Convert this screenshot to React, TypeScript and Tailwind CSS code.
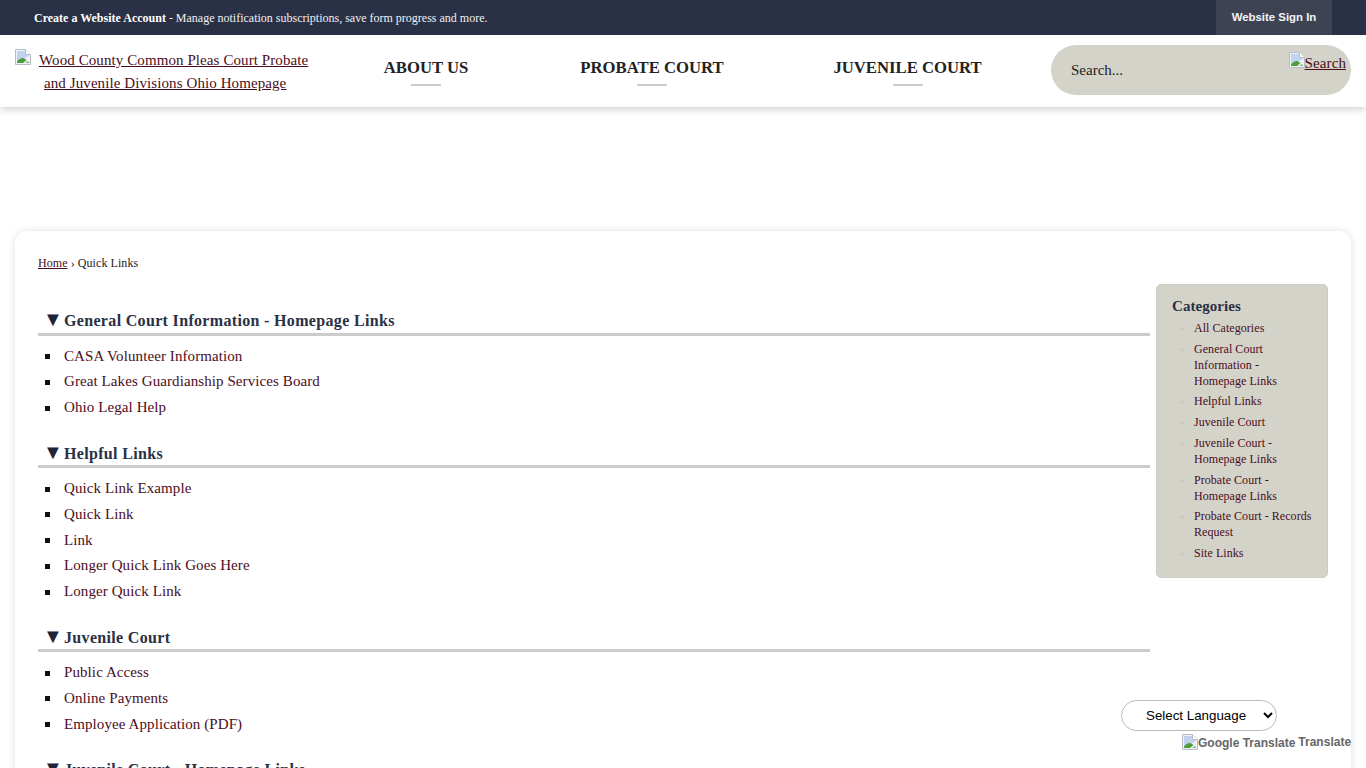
const F = "[font-family:'Liberation_Serif',serif]";

function Broken({ className = "" }: { className?: string }) {
  return (
    <svg width="16" height="16" viewBox="0 0 16 16" className={className}>
      <path d="M0.5 0.5H10.5L15.5 5.5V15.5H0.5Z" fill="#eef1f7" stroke="#b8bcc6" />
      <path d="M10.5 0.5V5.5H15.5" fill="#ffffff" stroke="#b8bcc6" />
      <path d="M2 2H10V6H14V7L2 13Z" fill="#bfd2f0" />
      <path d="M2 14V12.5C4 10 6.5 8.5 8.5 9L11.5 11L8 14Z" fill="#4f9e3a" />
      <path d="M10 14L12.5 12L14 13V14Z" fill="#8fc07e" />
    </svg>
  );
}

const sections = [
  { title: "General Court Information - Homepage Links", links: ["CASA Volunteer Information", "Great Lakes Guardianship Services Board", "Ohio Legal Help"] },
  { title: "Helpful Links", links: ["Quick Link Example", "Quick Link", "Link", "Longer Quick Link Goes Here", "Longer Quick Link"] },
  { title: "Juvenile Court", links: ["Public Access", "Online Payments", "Employee Application (PDF)"] },
  { title: "Juvenile Court - Homepage Links", links: [] as string[] },
];

const cats = [
  ["All Categories"],
  ["General Court Information -", "Homepage Links"],
  ["Helpful Links"],
  ["Juvenile Court"],
  ["Juvenile Court -", "Homepage Links"],
  ["Probate Court -", "Homepage Links"],
  ["Probate Court - Records", "Request"],
  ["Site Links"],
];

const nav = [
  { t: "ABOUT US", w: "w-[84px]", ml: "ml-[69px]" },
  { t: "PROBATE COURT", w: "w-[144px]", ml: "ml-[112px]" },
  { t: "JUVENILE COURT", w: "w-[149px]", ml: "ml-[109px]" },
];

export default function App() {
  return (
    <div className={`h-[768px] w-[1366px] overflow-hidden bg-white relative ${F}`}>
      <div className="h-[35px] bg-[#2a3045] flex items-center pl-[34px] relative z-20">
        <p className="text-[12px] text-[#f0f0f2]">
          <b className="text-white">Create a Website Account</b> - Manage notification subscriptions, save form progress and more.
        </p>
        <a className="ml-auto mr-[34px] w-[116px] h-[35px] bg-[#3e4354] flex items-center justify-center text-[#f4f4f6] text-[11.4px] font-bold font-['Liberation_Sans',sans-serif]">
          Website Sign In
        </a>
      </div>

      <header className="h-[72px] bg-white shadow-[0_2px_8px_rgba(0,0,0,0.2)] flex relative z-10 pl-[15px]">
        <a className="w-[300px] pt-[14px] text-[15px] leading-[23px] tracking-[0.09px] text-[#4a0d1c] underline block whitespace-nowrap">
          <span className="flex">
            <Broken className="mr-[8px] shrink-0" />
            <span>Wood County Common Pleas Court Probate</span>
          </span>
          <span className="block ml-[29px]">and Juvenile Divisions Ohio Homepage</span>
        </a>
        {nav.map((n) => (
          <div key={n.t} className={`${n.w} ${n.ml} shrink-0 flex flex-col items-center pt-[23px]`}>
            <span className="text-[16.7px] leading-[20px] font-bold text-[#222] whitespace-nowrap">{n.t}</span>
            <span className="block w-[30px] h-[2px] bg-[#ccc] mt-[6px]" />
          </div>
        ))}
        <div className="ml-[69px] mt-[10px] w-[300px] h-[50px] rounded-[25px] bg-[#d4d3c9] flex items-start pl-[20px] pr-[5px] relative">
          <span className="text-[15px] text-[#222] mt-[16px] leading-[18px]">Search...</span>
          <a className="ml-auto mt-[7px] flex text-[15px] leading-[18px] tracking-[0.1px] text-[#4a0d1c] underline">
            <Broken className="shrink-0" />
            <span className="mt-[2px]">Search</span>
          </a>
        </div>
      </header>

      <main className="mx-[15px] mt-[124px] bg-white rounded-t-[12px] shadow-[0_0_8px_rgba(0,0,0,0.12)] h-[600px] pl-[23px] pr-[23px] pt-[24px]">
        <p className="text-[12px] leading-[16px] tracking-[0.07px] text-[#222]">
          <a className="text-[#4a0d1c] underline">Home</a> › Quick Links
        </p>
        <div className="flex mt-[13px]">
          <div className="w-[1112px] shrink-0 pt-[25.3px]">
            {sections.map((s) => (
              <section key={s.title} className="mb-[21.3px]">
                <h2 className="text-[16px] leading-[23px] tracking-[0.33px] font-bold text-[#2a3045] border-b-[3px] border-[#ccc] flex pl-[5px] h-[26.3px] whitespace-nowrap">
                  <span className="w-[21px] text-[20px] leading-[21px] tracking-normal font-normal shrink-0 text-[#1e2438]">▼</span>
                  {s.title}
                </h2>
                <ul className="mt-[7.6px] text-[15px] leading-[17px] tracking-[0.09px]">
                  {s.links.map((l) => (
                    <li key={l} className="py-[4.4px] flex">
                      <span className="w-[5px] h-[5px] bg-[#111] ml-[7px] mr-[14px] mt-[6.5px] shrink-0" />
                      <a className="text-[#4a0d1c]">{l}</a>
                    </li>
                  ))}
                </ul>
              </section>
            ))}
          </div>
          <aside className="ml-[6px] w-[172px] h-[294px] shrink-0 bg-[#d4d3c9] border border-[#cdccc2] rounded-[5px] pl-[15px] pr-[12px] pt-[12px]">
            <h3 className="text-[15px] leading-[18px] font-bold tracking-[0.05px] text-[#2a3045]">Categories</h3>
            <ul className="list-disc pl-[22px] mt-[2.7px] text-[12px] leading-[16px] tracking-[0.05px] text-[#cbcac0]">
              {cats.map((c) => (
                <li key={c.join(" ")} className="py-[2.36px]">
                  <a className="text-[#4a0d1c]">
                    {c[0]}
                    {c[1] && <br />}
                    {c[1]}
                  </a>
                </li>
              ))}
            </ul>
          </aside>
        </div>
      </main>

      <div className="absolute left-[1121px] top-[700px] w-[156px] z-20">
        <select className="w-[156px] h-[31px] rounded-[16px] border border-[#bbb] bg-white text-[13.33px] text-black pl-[20px] font-['Liberation_Sans',sans-serif]">
          <option>Select Language</option>
        </select>
      </div>
      <div className="absolute left-[1182px] top-[734px] flex text-[12px] leading-[16px] font-bold text-[#666] font-['Liberation_Sans',sans-serif] whitespace-nowrap z-20">
        <Broken className="shrink-0" />
        <span className="mt-[1px]">Google Translate</span>
        <span className="ml-[3px]">Translate</span>
      </div>
    </div>
  );
}
